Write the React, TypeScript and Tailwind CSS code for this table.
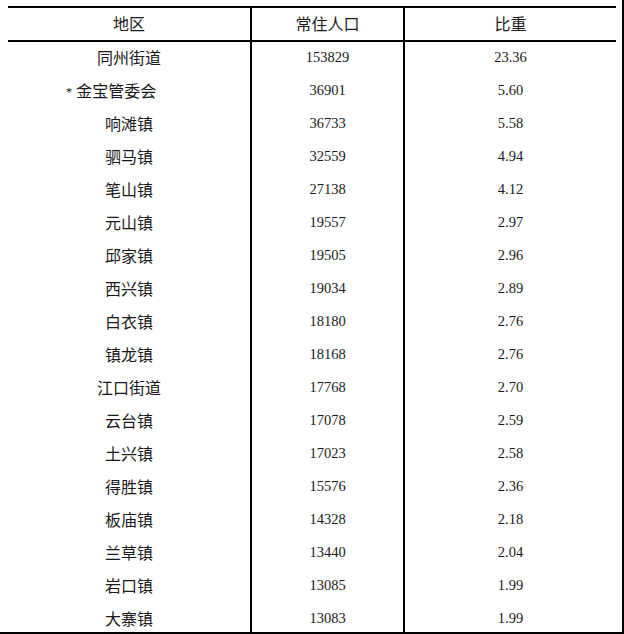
import React from 'react';

const rows: [string, string, string][] = [
  ['同州街道', '153829', '23.36'],
  ['* 金宝管委会', '36901', '5.60'],
  ['响滩镇', '36733', '5.58'],
  ['驷马镇', '32559', '4.94'],
  ['笔山镇', '27138', '4.12'],
  ['元山镇', '19557', '2.97'],
  ['邱家镇', '19505', '2.96'],
  ['西兴镇', '19034', '2.89'],
  ['白衣镇', '18180', '2.76'],
  ['镇龙镇', '18168', '2.76'],
  ['江口街道', '17768', '2.70'],
  ['云台镇', '17078', '2.59'],
  ['土兴镇', '17023', '2.58'],
  ['得胜镇', '15576', '2.36'],
  ['板庙镇', '14328', '2.18'],
  ['兰草镇', '13440', '2.04'],
  ['岩口镇', '13085', '1.99'],
  ['大寨镇', '13083', '1.99'],
];

const cjk = "font-['Noto_Sans_CJK_SC','Noto_Sans',sans-serif]";
const num = "font-['Liberation_Serif','Times_New_Roman',serif]";

const App = () => {
  return (
    <main className="w-[624px] h-[634px] overflow-hidden bg-white border-r-2 border-b-2 border-black pt-[6px] pl-[8px] relative">
      <div className="w-[608px] border-t-2 border-black grid grid-cols-[244px_153px_211px] text-[#1a1a1a]">
        {/* Header */}
        <div className={`h-[34px] pb-[2px] border-r-2 border-b-2 border-black flex items-center justify-center text-[16px] ${cjk}`}>地区</div>
        <div className={`h-[34px] pb-[2px] border-r-2 border-b-2 border-black flex items-center justify-center text-[16px] ${cjk}`}>常住人口</div>
        <div className={`h-[34px] pb-[2px] border-b-2 border-black flex items-center justify-center text-[16px] ${cjk}`}>比重</div>

        {rows.map(([name, pop, share], i) => (
          <React.Fragment key={i}>
            <div
              className={`h-[33px] pb-[3px] border-r-2 border-black flex items-center justify-center text-[16px] ${cjk} ${
                name.startsWith('*') ? 'pr-[36px]' : ''
              }`}
            >
              {name.startsWith('*') ? (
                <>
                  <span className={`text-[13px] mr-[4px] translate-y-[2px] ${num}`}>*</span>
                  {name.slice(2)}
                </>
              ) : (
                name
              )}
            </div>
            <div className={`h-[33px] pb-[1px] border-r-2 border-black flex items-center justify-center text-[14.5px] ${num}`}>{pop}</div>
            <div className={`h-[33px] pb-[1px] flex items-center justify-center text-[14.5px] ${num}`}>{share}</div>
          </React.Fragment>
        ))}
      </div>
    </main>
  );
};

export default App;
